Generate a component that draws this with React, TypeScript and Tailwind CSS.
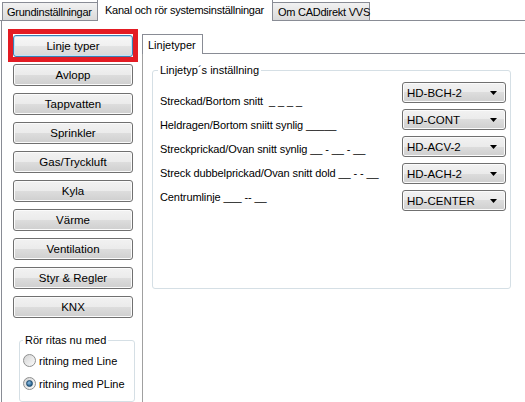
import React from 'react';

const btnGray =
  'border border-[#707070] rounded-[3px] bg-[linear-gradient(to_bottom,#f2f2f2_0%,#ebebeb_50%,#dddddd_50%,#cfcfcf_100%)] shadow-[inset_0_0_0_1px_#fbfbfb]';

const sideButtons = [
  'Avlopp',
  'Tappvatten',
  'Sprinkler',
  'Gas/Tryckluft',
  'Kyla',
  'Värme',
  'Ventilation',
  'Styr & Regler',
  'KNX',
];

const lineRows = [
  { label: 'Streckad/Bortom snitt  _ _ _ _', value: 'HD-BCH-2' },
  { label: 'Heldragen/Bortom sniitt synlig _____', value: 'HD-CONT' },
  { label: 'Streckprickad/Ovan snitt synlig __ - __ - __', value: 'HD-ACV-2' },
  { label: 'Streck dubbelprickad/Ovan snitt dold __ - - __', value: 'HD-ACH-2' },
  { label: 'Centrumlinje ___ -- __', value: 'HD-CENTER' },
];

function Radio({ checked, label }: { checked?: boolean; label: string }) {
  return (
    <div className="flex h-[23px] items-center whitespace-nowrap">
      <div className="ml-[3px] flex h-[13px] w-[13px] items-center justify-center rounded-full border border-[#8e8f8f] bg-[linear-gradient(135deg,#d4d4d4,#fbfbfb)]">
        {checked && (
          <div className="h-[7px] w-[7px] rounded-full border border-[#1b4a6e] bg-[radial-gradient(circle_at_40%_35%,#8fc1e8,#2a628d_70%)]" />
        )}
      </div>
      <span className="ml-[3px]">{label}</span>
    </div>
  );
}

function Combo({ value }: { value: string }) {
  return (
    <div className={`flex h-[21px] w-[104px] items-center justify-between pl-[4px] pr-[8px] text-[11.5px] ${btnGray}`}>
      <span>{value}</span>
      <svg width="7" height="4" viewBox="0 0 7 4">
        <path d="M0 0h7L3.5 4z" fill="#000" />
      </svg>
    </div>
  );
}

export default function App() {
  return (
    <div className="relative h-[402px] w-[525px] overflow-hidden bg-white text-[11px] leading-[14px] text-black [font-family:'Liberation_Sans',Arial,sans-serif]">
      {/* top tabs */}
      <div className="flex h-[21px] items-end whitespace-nowrap border-b border-[#898c95] pl-[2px] tracking-[-0.25px]">
        <div className="flex h-[18px] w-[96px] items-center border border-b-0 border-[#898c95] bg-[linear-gradient(to_bottom,#f2f2f2,#dadada)] pl-[4px]">
          Grundinställningar
        </div>
        <div className="-mb-px -ml-px flex h-[22px] w-[176px] items-start border border-b-0 border-[#898c95] bg-white pl-[7px] pt-[3px]">
          Kanal och rör systemsinställningar
        </div>
        <div className="-ml-px flex h-[18px] w-[98px] items-center border border-b-0 border-[#898c95] bg-[linear-gradient(to_bottom,#f2f2f2,#dadada)] pl-[5px]">
          Om CADdirekt VVS
        </div>
      </div>

      <div className="ml-px flex h-[381px] border-l border-[#898c95]">
        {/* left column */}
        <div className="flex w-[140px] flex-col pl-[11px] pt-[14px]">
          <div className="flex flex-col gap-[7px] text-[11.5px]">
            <button
              type="button"
              className="h-[22px] w-[120px] rounded-[3px] border border-[#3c7fb1] bg-[linear-gradient(to_bottom,#f7f7f7_0%,#f0f0f0_50%,#e4e4e4_50%,#d8d8d8_100%)] shadow-[inset_0_0_0_1px_#bfe4f9]"
            >
              Linje typer
            </button>
            {sideButtons.map((b) => (
              <button key={b} type="button" className={`h-[22px] w-[120px] ${btnGray}`}>
                {b}
              </button>
            ))}
          </div>

          <fieldset className="ml-[6px] mt-[15px] h-[80px] w-[116px] rounded-[3px] border border-[#d5dfe5]">
            <legend className="ml-[3px] whitespace-nowrap px-[2px]">Rör ritas nu med</legend>
            <div className="mt-[2px]">
              <Radio label="ritning med Line" />
              <Radio checked label="ritning med PLine" />
            </div>
          </fieldset>
        </div>

        {/* inner tab control */}
        <div className="flex flex-1 flex-col pt-[13px]">
          <div className="flex h-[20px] items-end border-b border-[#898c95]">
            <div className="-mb-px flex h-[20px] w-[61px] items-center border border-b-0 border-[#898c95] bg-white pl-[5px]">
              Linjetyper
            </div>
          </div>
          <div className="flex-1 border-l border-[#a0a0a0] pl-[9px] pt-[9px]">
            <fieldset className="h-[226px] w-[359px] rounded-[3px] border border-[#d5dfe5]">
              <legend className="ml-[5px] px-[2px]">Linjetyp´s inställning</legend>
              <div className="flex justify-between pl-[7px] pr-[4px]">
                <div className="mt-[12px] flex flex-col tracking-[-0.1px]">
                  {lineRows.map((r) => (
                    <div key={r.value} className="h-[24px] whitespace-pre leading-[24px]">
                      {r.label}
                    </div>
                  ))}
                </div>
                <div className="mt-[5px] flex flex-col gap-[6px]">
                  {lineRows.map((r) => (
                    <Combo key={r.value} value={r.value} />
                  ))}
                </div>
              </div>
            </fieldset>
          </div>
        </div>
      </div>

      {/* highlight marker */}
      <div className="pointer-events-none absolute left-[8px] top-[29px] h-[33px] w-[130px] border-[5px] border-[#e31b23]" />
    </div>
  );
}
